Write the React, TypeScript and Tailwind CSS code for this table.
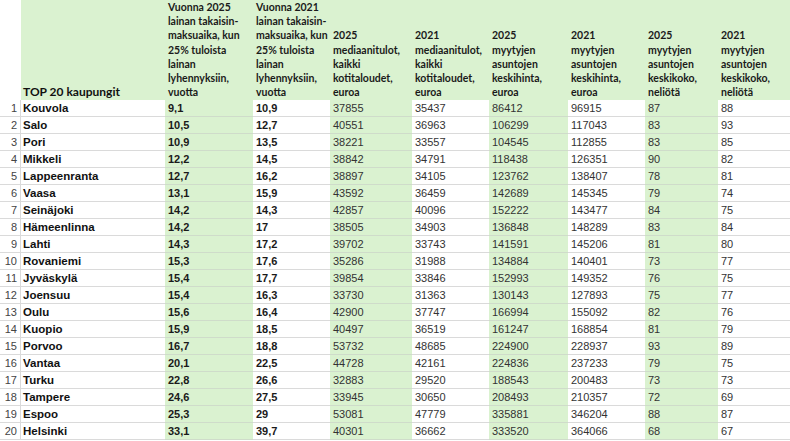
import React from "react";

type Row = [string, string, string, string, string, string, string, string, string];

const rows: Row[] = [
  ["Kouvola", "9,1", "10,9", "37855", "35437", "86412", "96915", "87", "88"],
  ["Salo", "10,5", "12,7", "40551", "36963", "106299", "117043", "83", "93"],
  ["Pori", "10,9", "13,5", "38221", "33557", "104545", "112855", "83", "85"],
  ["Mikkeli", "12,2", "14,5", "38842", "34791", "118438", "126351", "90", "82"],
  ["Lappeenranta", "12,7", "16,2", "38897", "34105", "123762", "138407", "78", "81"],
  ["Vaasa", "13,1", "15,9", "43592", "36459", "142689", "145345", "79", "74"],
  ["Seinäjoki", "14,2", "14,3", "42857", "40096", "152222", "143477", "84", "75"],
  ["Hämeenlinna", "14,2", "17", "38505", "34903", "136848", "148289", "83", "84"],
  ["Lahti", "14,3", "17,2", "39702", "33743", "141591", "145206", "81", "80"],
  ["Rovaniemi", "15,3", "17,6", "35286", "31988", "134884", "140401", "73", "77"],
  ["Jyväskylä", "15,4", "17,7", "39854", "33846", "152993", "149352", "76", "75"],
  ["Joensuu", "15,4", "16,3", "33730", "31363", "130143", "127893", "75", "77"],
  ["Oulu", "15,6", "16,4", "42900", "37747", "166994", "155092", "82", "76"],
  ["Kuopio", "15,9", "18,5", "40497", "36519", "161247", "168854", "81", "79"],
  ["Porvoo", "16,7", "18,8", "53732", "48685", "224900", "228937", "93", "89"],
  ["Vantaa", "20,1", "22,5", "44728", "42161", "224836", "237233", "79", "75"],
  ["Turku", "22,8", "26,6", "32883", "29520", "188543", "200483", "73", "73"],
  ["Tampere", "24,6", "27,5", "33945", "30650", "208493", "210357", "72", "69"],
  ["Espoo", "25,3", "29", "53081", "47779", "335881", "346204", "88", "87"],
  ["Helsinki", "33,1", "39,7", "40301", "36662", "333520", "364066", "68", "67"],
];

const headers: string[][] = [
  ["Vuonna 2025", "lainan takaisin-", "maksuaika, kun", "25% tuloista", "lainan", "lyhennyksiin,", "vuotta"],
  ["Vuonna 2021", "lainan takaisin-", "maksuaika, kun", "25% tuloista", "lainan", "lyhennyksiin,", "vuotta"],
  ["2025", "mediaanitulot,", "kaikki", "kotitaloudet,", "euroa"],
  ["2021", "mediaanitulot,", "kaikki", "kotitaloudet,", "euroa"],
  ["2025", "myytyjen", "asuntojen", "keskihinta,", "euroa"],
  ["2021", "myytyjen", "asuntojen", "keskihinta,", "euroa"],
  ["2025", "myytyjen", "asuntojen", "keskikoko,", "neliötä"],
  ["2021", "myytyjen", "asuntojen", "keskikoko,", "neliötä"],
];

const grid = "grid grid-cols-[21px_144px_88px_77px_82px_77px_79px_77px_73px_72px]";

export default function App() {
  return (
    <div className="w-[790px] h-[441px] overflow-hidden bg-white font-['Liberation_Sans',Arial,sans-serif]">
      {/* header */}
      <div className={`${grid} h-[100px]`}>
        <div className="bg-white" />
        <div className="bg-[#daf2d0] flex items-end pl-[2px] pb-[1px]">
          <span className="font-['Lato',sans-serif] font-bold text-[12px] leading-[15px] text-[#111]">
            TOP 20 kaupungit
          </span>
        </div>
        {headers.map((lines, i) => (
          <div key={i} className="bg-[#daf2d0] flex flex-col justify-end pl-[3px] pb-[1px]">
            {lines.map((l, j) => (
              <span
                key={j}
                className="block whitespace-nowrap font-['Lato',sans-serif] font-bold text-[10.5px] leading-[14.2px] text-[#1a1a1a]"
              >
                {l}
              </span>
            ))}
          </div>
        ))}
      </div>

      {/* body */}
      {rows.map((r, i) => (
        <div key={i} className={`${grid} h-[17px]`}>
          <div className="border-b border-r border-[#dadada] text-right pr-[3px] text-[11px] leading-[16px] text-[#444]">
            {i + 1}
          </div>
          <div className="border-b border-[#dadada] pl-[2px] font-bold text-[11.5px] leading-[16px] text-[#111]">
            {r[0]}
          </div>
          {r.slice(1).map((v, j) => (
            <div
              key={j}
              className={`border-b pl-[3px] text-[11px] leading-[16px] ${
                j % 2 === 0 ? "bg-[#daf2d0] border-[#cfdcca]" : "bg-white border-[#dadada]"
              } ${j < 2 ? "font-bold text-[#1a1a1a]" : "text-[#333]"}`}
            >
              {v}
            </div>
          ))}
        </div>
      ))}
    </div>
  );
}
